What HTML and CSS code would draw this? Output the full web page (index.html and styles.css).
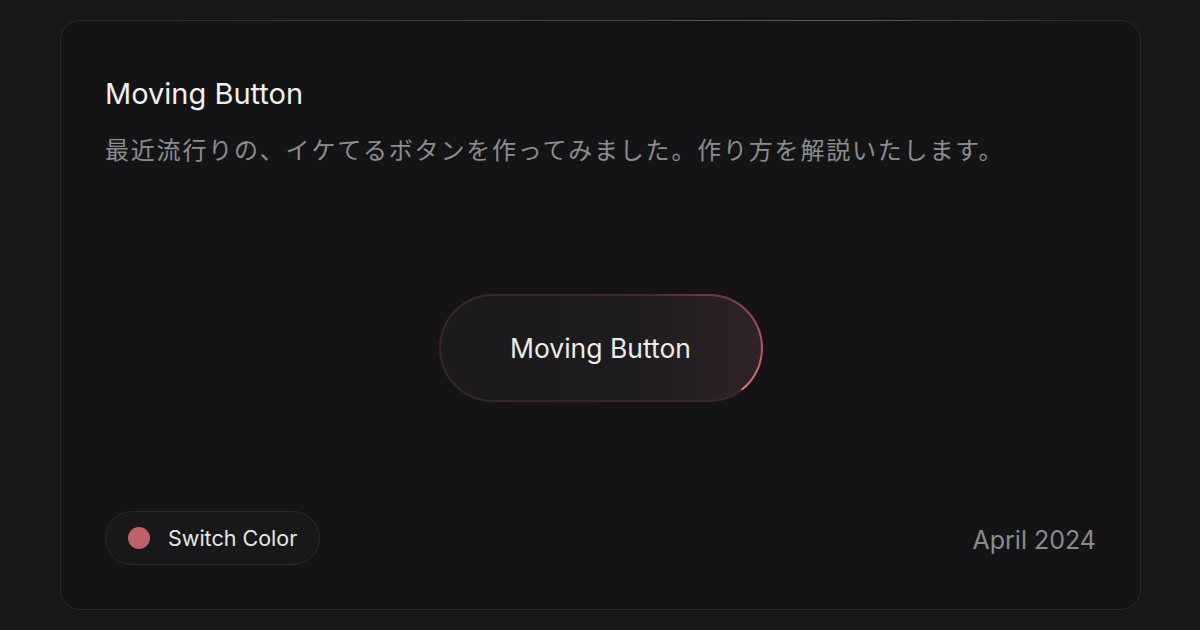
FILE: index.html
```html
<!DOCTYPE html>
<html lang="ja">
<head>
    <meta charset="UTF-8">
    <meta name="viewport" content="width=device-width, initial-scale=1.0">
    <title>Moving Button</title>
    <link rel="stylesheet" href="styles.css">
</head>
<body>
    <div class="card">
        <div class="card-header">
            <h2 class="card-title">Moving Button</h2>
            <p class="card-desc">最近流行りの、イケてるボタンを作ってみました。作り方を解説いたします。</p>
        </div>

        <div class="stage">
            <button class="moving-button">Moving Button</button>
        </div>

        <div class="card-footer">
            <button class="switch-color">
                <span class="swatch"></span>
                Switch Color
            </button>
            <span class="date">April 2024</span>
        </div>
    </div>
</body>
</html>
```

FILE: styles.css
```css
body {
    margin: 0;
    padding: 20px 59px 20px 60px;
    background: #171719;
    color: #ededed;
    font-family: Inter, "Noto Sans CJK JP", sans-serif;
    height: 630px;
    box-sizing: border-box;
}

.card {
    position: relative;
    display: flex;
    flex-direction: column;
    height: 100%;
    box-sizing: border-box;
    padding: 56px 44px 44px 44px;
    background: #141416;
    border: 1px solid #29292c;
    border-radius: 20px;
}

/* light streak along the top edge */
.card::before {
    content: "";
    position: absolute;
    top: -1px;
    left: 40px;
    right: 40px;
    height: 1px;
    background: linear-gradient(90deg, rgba(90, 90, 95, 0) 0%, #3c3c40 30%, #5a5a5e 75%, rgba(90, 90, 95, 0) 100%);
}

.card-title {
    margin: 0;
    font-size: 29px;
    font-weight: 400;
    line-height: 34px;
    color: #f0f0f0;
}

.card-desc {
    margin: 22px 0 0 0;
    font-family: "Noto Sans CJK JP", sans-serif;
    font-size: 24px;
    letter-spacing: 1.8px;
    line-height: 32px;
    color: #8c8c90;
}

.stage {
    flex: 1;
    display: flex;
    justify-content: center;
    align-items: center;
    padding-top: 20px;
}

.moving-button {
    width: 324px;
    height: 108px;
    border: 2px solid transparent;
    border-radius: 54px;
    background:
        linear-gradient(90deg, #1b1a1d 0%, #1d1b1e 55%, #2f2327 100%) padding-box,
        conic-gradient(from 0deg,
            #3d272c 0deg,
            #472a30 45deg,
            #7a3d45 70deg,
            #ea7076 106deg,
            #3d272c 107deg,
            #36242a 200deg,
            #3d272c 360deg) border-box;
    color: #ececec;
    font-family: Inter, sans-serif;
    font-size: 26.5px;
    font-weight: 400;
    cursor: pointer;
}

.card-footer {
    display: flex;
    justify-content: space-between;
    align-items: center;
}

.switch-color {
    display: flex;
    align-items: center;
    gap: 18px;
    height: 54px;
    padding: 0 22px 0 22px;
    background: #18181a;
    border: 1px solid #2a2a2d;
    border-radius: 27px;
    color: #e6e6e6;
    font-family: Inter, sans-serif;
    font-size: 21.5px;
    cursor: pointer;
}

.swatch {
    width: 22px;
    height: 22px;
    border-radius: 50%;
    background: #c2606a;
}

.date {
    font-size: 25px;
    color: #8a8a8e;
    margin-top: 4px;
}
```
